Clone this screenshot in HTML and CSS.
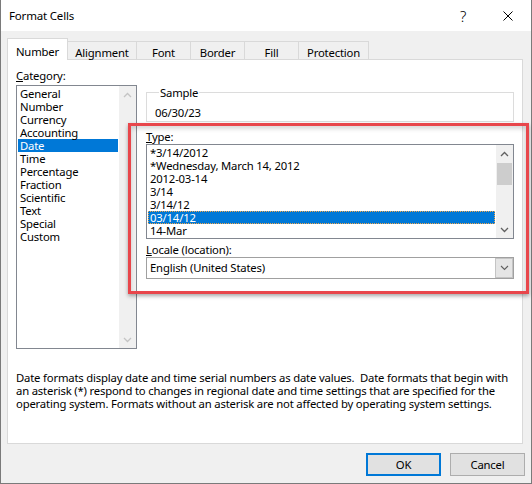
FILE: index.html
```html
<!DOCTYPE html>
<html lang="en">
<head>
  <meta charset="UTF-8" />
  <title>Format Cells</title>
  <link rel="stylesheet" href="styles.css">
</head>
<body>
  <div class="window">
    <div class="titlebar">
      <span class="title">Format Cells</span>
      <span class="caption-btn help">?</span>
      <span class="caption-btn">
        <svg width="10" height="10" viewBox="0 0 10 10"><path d="M0.5 0.5 L9.5 9.5 M9.5 0.5 L0.5 9.5" stroke="#000" stroke-width="1" fill="none"/></svg>
      </span>
    </div>

    <div class="tabs">
      <div class="tab active" style="width:61px">Number</div>
      <div class="tab" style="width:70px">Alignment</div>
      <div class="tab" style="width:55px">Font</div>
      <div class="tab" style="width:55px">Border</div>
      <div class="tab" style="width:55px">Fill</div>
      <div class="tab" style="width:71px">Protection</div>
    </div>

    <div class="panel">
      <div class="panel-top">
        <div class="category">
          <div class="label"><u>C</u>ategory:</div>
          <div class="listbox cat-list">
            <div class="items">
              <div class="item">General</div>
              <div class="item">Number</div>
              <div class="item">Currency</div>
              <div class="item">Accounting</div>
              <div class="item sel">Date</div>
              <div class="item">Time</div>
              <div class="item">Percentage</div>
              <div class="item">Fraction</div>
              <div class="item">Scientific</div>
              <div class="item">Text</div>
              <div class="item">Special</div>
              <div class="item">Custom</div>
            </div>
            <div class="scroll">
              <div class="arrow"><svg width="9" height="6" viewBox="0 0 9 6"><path d="M1 5 L4.5 1.5 L8 5" stroke="#c4c4c4" stroke-width="1.3" fill="none"/></svg></div>
              <div class="arrow down"><svg width="9" height="6" viewBox="0 0 9 6"><path d="M1 1 L4.5 4.5 L8 1" stroke="#c4c4c4" stroke-width="1.3" fill="none"/></svg></div>
            </div>
          </div>
        </div>

        <div class="details">
          <fieldset class="sample">
            <legend>Sample</legend>
            <div>06/30/23</div>
          </fieldset>

          <div class="highlight">
            <div class="label"><u>T</u>ype:</div>
            <div class="listbox type-list">
              <div class="items">
                <div class="item">*3/14/2012</div>
                <div class="item">*Wednesday, March 14, 2012</div>
                <div class="item">2012-03-14</div>
                <div class="item">3/14</div>
                <div class="item">3/14/12</div>
                <div class="item sel focus">03/14/12</div>
                <div class="item">14-Mar</div>
              </div>
              <div class="scroll">
                <div class="arrow"><svg width="9" height="6" viewBox="0 0 9 6"><path d="M1 5 L4.5 1.5 L8 5" stroke="#606060" stroke-width="1.3" fill="none"/></svg></div>
                <div class="thumb"></div>
                <div class="arrow down"><svg width="9" height="6" viewBox="0 0 9 6"><path d="M1 1 L4.5 4.5 L8 1" stroke="#606060" stroke-width="1.3" fill="none"/></svg></div>
              </div>
            </div>

            <div class="label locale-label"><u>L</u>ocale (location):</div>
            <div class="combo">
              <span class="combo-text">English (United States)</span>
              <span class="combo-btn"><svg width="9" height="6" viewBox="0 0 9 6"><path d="M1 1 L4.5 4.5 L8 1" stroke="#606060" stroke-width="1.1" fill="none"/></svg></span>
            </div>
          </div>
        </div>
      </div>

      <p class="desc">Date formats display date and time serial numbers as date values.&nbsp; Date formats that begin with<br>an asterisk (*) respond to changes in regional date and time settings that are specified for the<br>operating system. Formats without an asterisk are not affected by operating system settings.</p>
    </div>

    <div class="footer">
      <button class="btn default">OK</button>
      <button class="btn">Cancel</button>
    </div>
  </div>
</body>
</html>
```

FILE: styles.css
```css
body {
  margin: 0;
  font-family: "Noto Sans", "Open Sans", sans-serif;
  font-size: 11.3px;
  letter-spacing: -0.18px;
  color: #000;
  background: #fff;
}
.window {
  width: 532px;
  height: 484px;
  box-sizing: border-box;
  border: 1px solid #7a7a7a;
  border-top: none;
  background: #f0f0f0;
}
.titlebar {
  height: 31px;
  background: #fff;
  display: flex;
  align-items: center;
  padding-left: 8px;
}
.title {
  flex: 1;
  font-size: 11.5px;
}
.caption-btn {
  width: 46px;
  height: 31px;
  display: flex;
  align-items: center;
  justify-content: center;
}
.help {
  font-size: 15px;
  font-weight: 300;
  color: #000;
  padding-left: 2px;
  box-sizing: border-box;
}
.tabs {
  height: 28px;
  display: flex;
  align-items: flex-end;
  padding-left: 6px;
}
.tab {
  box-sizing: border-box;
  height: 18px;
  margin-right: -1px;
  padding-top: 4px;
  line-height: 13px;
  text-align: center;
  border: 1px solid #d9d9d9;
  border-bottom: none;
  background: #f0f0f0;
}
.tab.active {
  height: 22px;
  margin-bottom: -1px;
  padding-top: 6px;
  background: #fff;
  position: relative;
  z-index: 1;
}
.panel {
  box-sizing: border-box;
  width: 516px;
  height: 385px;
  margin-left: 6px;
  padding: 9px 8px 0;
  background: #fff;
  border: 1px solid #d9d9d9;
}
.panel-top {
  display: flex;
  gap: 9px;
}
.category {
  width: 122px;
}
.label {
  line-height: 13px;
  margin-bottom: 3px;
}
.listbox {
  box-sizing: border-box;
  display: flex;
  border: 1px solid #828790;
  background: #fff;
}
.cat-list {
  height: 264px;
}
.items {
  flex: 1;
  padding: 1px;
}
.item {
  height: 13px;
  line-height: 13px;
  padding-left: 2px;
  white-space: nowrap;
}
.item.sel {
  background: #0078d7;
  color: #fff;
}
.item.focus {
  outline: 1px dotted #f2a64a;
  outline-offset: -1px;
}
.scroll {
  width: 17px;
  background: #f0f0f0;
  display: flex;
  flex-direction: column;
}
.arrow {
  height: 17px;
  display: flex;
  align-items: center;
  justify-content: center;
}
.arrow.down {
  margin-top: auto;
}
.thumb {
  height: 22px;
  margin: 1px 1px 0;
  background: #cdcdcd;
}
.details {
  width: 369px;
}
.sample {
  margin: 17px 0 0;
  padding: 7px 0 2px 8px;
  border: 1px solid #dcdcdc;
  min-width: 0;
  width: 368px;
  box-sizing: border-box;
  line-height: 13px;
}
.sample legend {
  margin-left: 4px;
  padding: 0 1px;
  line-height: 13px;
}
.highlight {
  position: relative;
  margin-top: 1px;
  padding: 7px 0 15px;
}
.highlight::after {
  content: "";
  position: absolute;
  left: -18px;
  right: -15px;
  top: 0;
  bottom: 0;
  border: 3px solid #e8464b;
  box-shadow: 0 2px 4px rgba(0, 0, 0, 0.35), inset 0 3px 4px rgba(0, 0, 0, 0.15);
  pointer-events: none;
}
.highlight .label {
  margin-bottom: 1px;
}
.type-list {
  height: 95px;
}
.locale-label {
  margin-top: 4px;
  margin-bottom: 2px;
}
.combo {
  box-sizing: border-box;
  height: 22px;
  display: flex;
  border: 1px solid #a0a0a0;
  background: #fff;
}
.combo-text {
  flex: 1;
  line-height: 20px;
  padding-left: 3px;
}
.combo-btn {
  box-sizing: border-box;
  width: 18px;
  background: #e5e5e5;
  border: 1px solid #c4c4c4;
  display: flex;
  align-items: center;
  justify-content: center;
}
.desc {
  margin: 22px 0 0;
  line-height: 13px;
  white-space: nowrap;
}
.footer {
  display: flex;
  justify-content: flex-end;
  gap: 9px;
  padding: 9px 6px 0 0;
}
.btn {
  box-sizing: border-box;
  width: 75px;
  height: 23px;
  font-family: inherit;
  font-size: 11.3px;
  letter-spacing: inherit;
  color: #000;
  background: #e1e1e1;
  border: 1px solid #adadad;
  padding: 0;
}
.btn.default {
  border: 2px solid #0078d7;
}
```
